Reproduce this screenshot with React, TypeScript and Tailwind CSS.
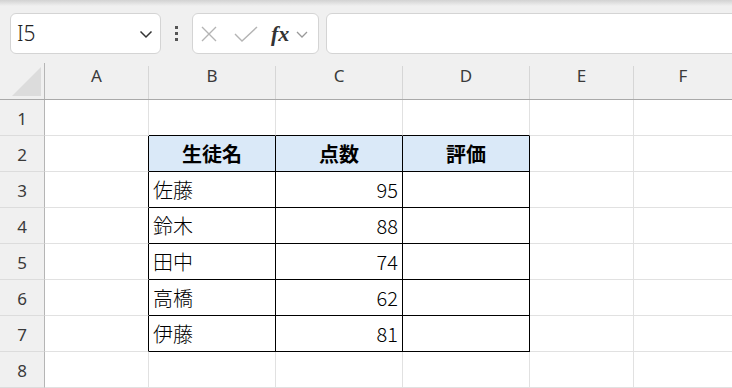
import React from 'react';

const columns = ['A', 'B', 'C', 'D', 'E', 'F'];

const students: [string, number][] = [
  ['佐藤', 95],
  ['鈴木', 88],
  ['田中', 74],
  ['高橋', 62],
  ['伊藤', 81],
];

const gridCols = 'grid grid-cols-[45px_104px_127px_127px_127px_104px_1fr]';

export default function App() {
  return (
    <div className="w-[732px] h-[388px] overflow-hidden bg-[#f0f0f0] font-['Noto_Sans','Noto_Sans_CJK_JP',sans-serif]">
      <Toolbar />
      <Sheet />
    </div>
  );
}

function Toolbar() {
  return (
    <div className="h-[63px] overflow-hidden">
      <div className="h-[6px] bg-gradient-to-b from-[#d2d2d2] to-[#f0f0f0]" />
      <div className="flex items-start pt-[7px]">
        <div className="ml-[10px] shrink-0 w-[151px] h-[41px] flex items-center justify-between rounded-[6px] border border-[#d4d4d4] bg-white pl-[6px] pr-[6px]">
          <span className="text-[21px] font-light text-[#222] font-['Noto_Sans',sans-serif]">I5</span>
          <svg width="16" height="16" viewBox="0 0 16 16" className="text-[#333]">
            <path d="M2.5 5.5 L8 11 L13.5 5.5" fill="none" stroke="currentColor" strokeWidth="1.5" />
          </svg>
        </div>
        <div className="shrink-0 w-[31px] h-[41px] flex flex-col items-center justify-center gap-[3px]">
          <span className="block w-[3px] h-[3px] bg-[#555]" />
          <span className="block w-[3px] h-[3px] bg-[#555]" />
          <span className="block w-[3px] h-[3px] bg-[#555]" />
        </div>
        <div className="shrink-0 w-[127px] h-[41px] flex items-center rounded-[6px] border border-[#d4d4d4] bg-white pl-[8px]">
          <svg width="16" height="16" viewBox="0 0 16 16" className="text-[#b4b4b4]">
            <path d="M1 1 L15 15 M15 1 L1 15" fill="none" stroke="currentColor" strokeWidth="1.4" />
          </svg>
          <svg width="24" height="16" viewBox="0 0 24 16" className="ml-[17px] text-[#b4b4b4]">
            <path d="M1 8 L8 15 L23 1" fill="none" stroke="currentColor" strokeWidth="1.4" />
          </svg>
          <span className="ml-[13px] text-[22px] leading-none italic font-bold text-[#333] font-['Liberation_Serif',serif]">fx</span>
          <svg width="14" height="14" viewBox="0 0 14 14" className="ml-[6px] text-[#999]">
            <path d="M2 5 L7 10 L12 5" fill="none" stroke="currentColor" strokeWidth="1.3" />
          </svg>
        </div>
        <div className="shrink-0 ml-[7px] w-[420px] h-[41px] rounded-[6px] border border-[#d4d4d4] bg-white" />
      </div>
    </div>
  );
}

function Sheet() {
  return (
    <div>
      <div className={`${gridCols} h-[37px] border-b border-[#a9a9a9]`}>
        <div className="flex items-center justify-end border-r border-[#b5b5b5] pr-[3px]">
          <svg width="29" height="29" viewBox="0 0 29 29">
            <path d="M29 0 L29 29 L0 29 Z" fill="#dcdcdc" />
          </svg>
        </div>
        {columns.map((c, i) => (
          <div key={c} className="flex">
            <span className="flex-1 text-center pt-px leading-6 text-[17px] text-[#3a3a3a]">{c}</span>
            {i < columns.length - 1 && <div className="w-px h-[33px] self-end bg-[#d6d6d6]" />}
          </div>
        ))}
      </div>

      {Array.from({ length: 8 }, (_, r) => (
        <SheetRow key={r} row={r + 1} />
      ))}
    </div>
  );
}

function SheetRow({ row }: { row: number }) {
  const inTable = row >= 2 && row <= 7;
  const student = row >= 3 && row <= 7 ? students[row - 3] : null;

  const plain = 'border-r border-b border-[#e1e1e1] bg-white';
  const boxed = 'border-r border-b border-black';

  return (
    <div className={`${gridCols} h-9`}>
      <div className="flex items-center justify-center pt-[3px] bg-[#f0f0f0] border-r border-b border-r-[#b5b5b5] border-b-[#dcdcdc] text-[17px] text-[#3a3a3a]">
        {row}
      </div>

      {/* A */}
      <div className={inTable ? 'border-r border-b border-r-black border-b-[#e1e1e1] bg-white' : plain} />

      {/* B, C, D */}
      {row === 1 && (
        <>
          <div className="border-r border-b border-r-[#e1e1e1] border-b-black bg-white" />
          <div className="border-r border-b border-r-[#e1e1e1] border-b-black bg-white" />
          <div className="border-r border-b border-r-[#e1e1e1] border-b-black bg-white" />
        </>
      )}
      {row === 2 && (
        <>
          <HeaderCell label="生徒名" />
          <HeaderCell label="点数" />
          <HeaderCell label="評価" />
        </>
      )}
      {student && (
        <>
          <div className={`${boxed} bg-white flex items-center pl-[4px] text-[20px] font-light text-black font-['Noto_Sans_CJK_JP',sans-serif]`}>
            {student[0]}
          </div>
          <div className={`${boxed} bg-white flex items-center justify-end pr-[4px] text-[20px] font-light text-black font-['Noto_Sans_CJK_JP',sans-serif]`}>
            {student[1]}
          </div>
          <div className={`${boxed} bg-white`} />
        </>
      )}
      {row === 8 && (
        <>
          <div className={plain} />
          <div className={plain} />
          <div className={plain} />
        </>
      )}

      {/* E, F */}
      <div className={plain} />
      <div className="border-b border-[#e1e1e1] bg-white" />
    </div>
  );
}

function HeaderCell({ label }: { label: string }) {
  return (
    <div className="border-r border-b border-black bg-[#dae9f8] flex items-center justify-center text-[20px] font-bold text-black font-['Noto_Sans_CJK_JP',sans-serif]">
      {label}
    </div>
  );
}
